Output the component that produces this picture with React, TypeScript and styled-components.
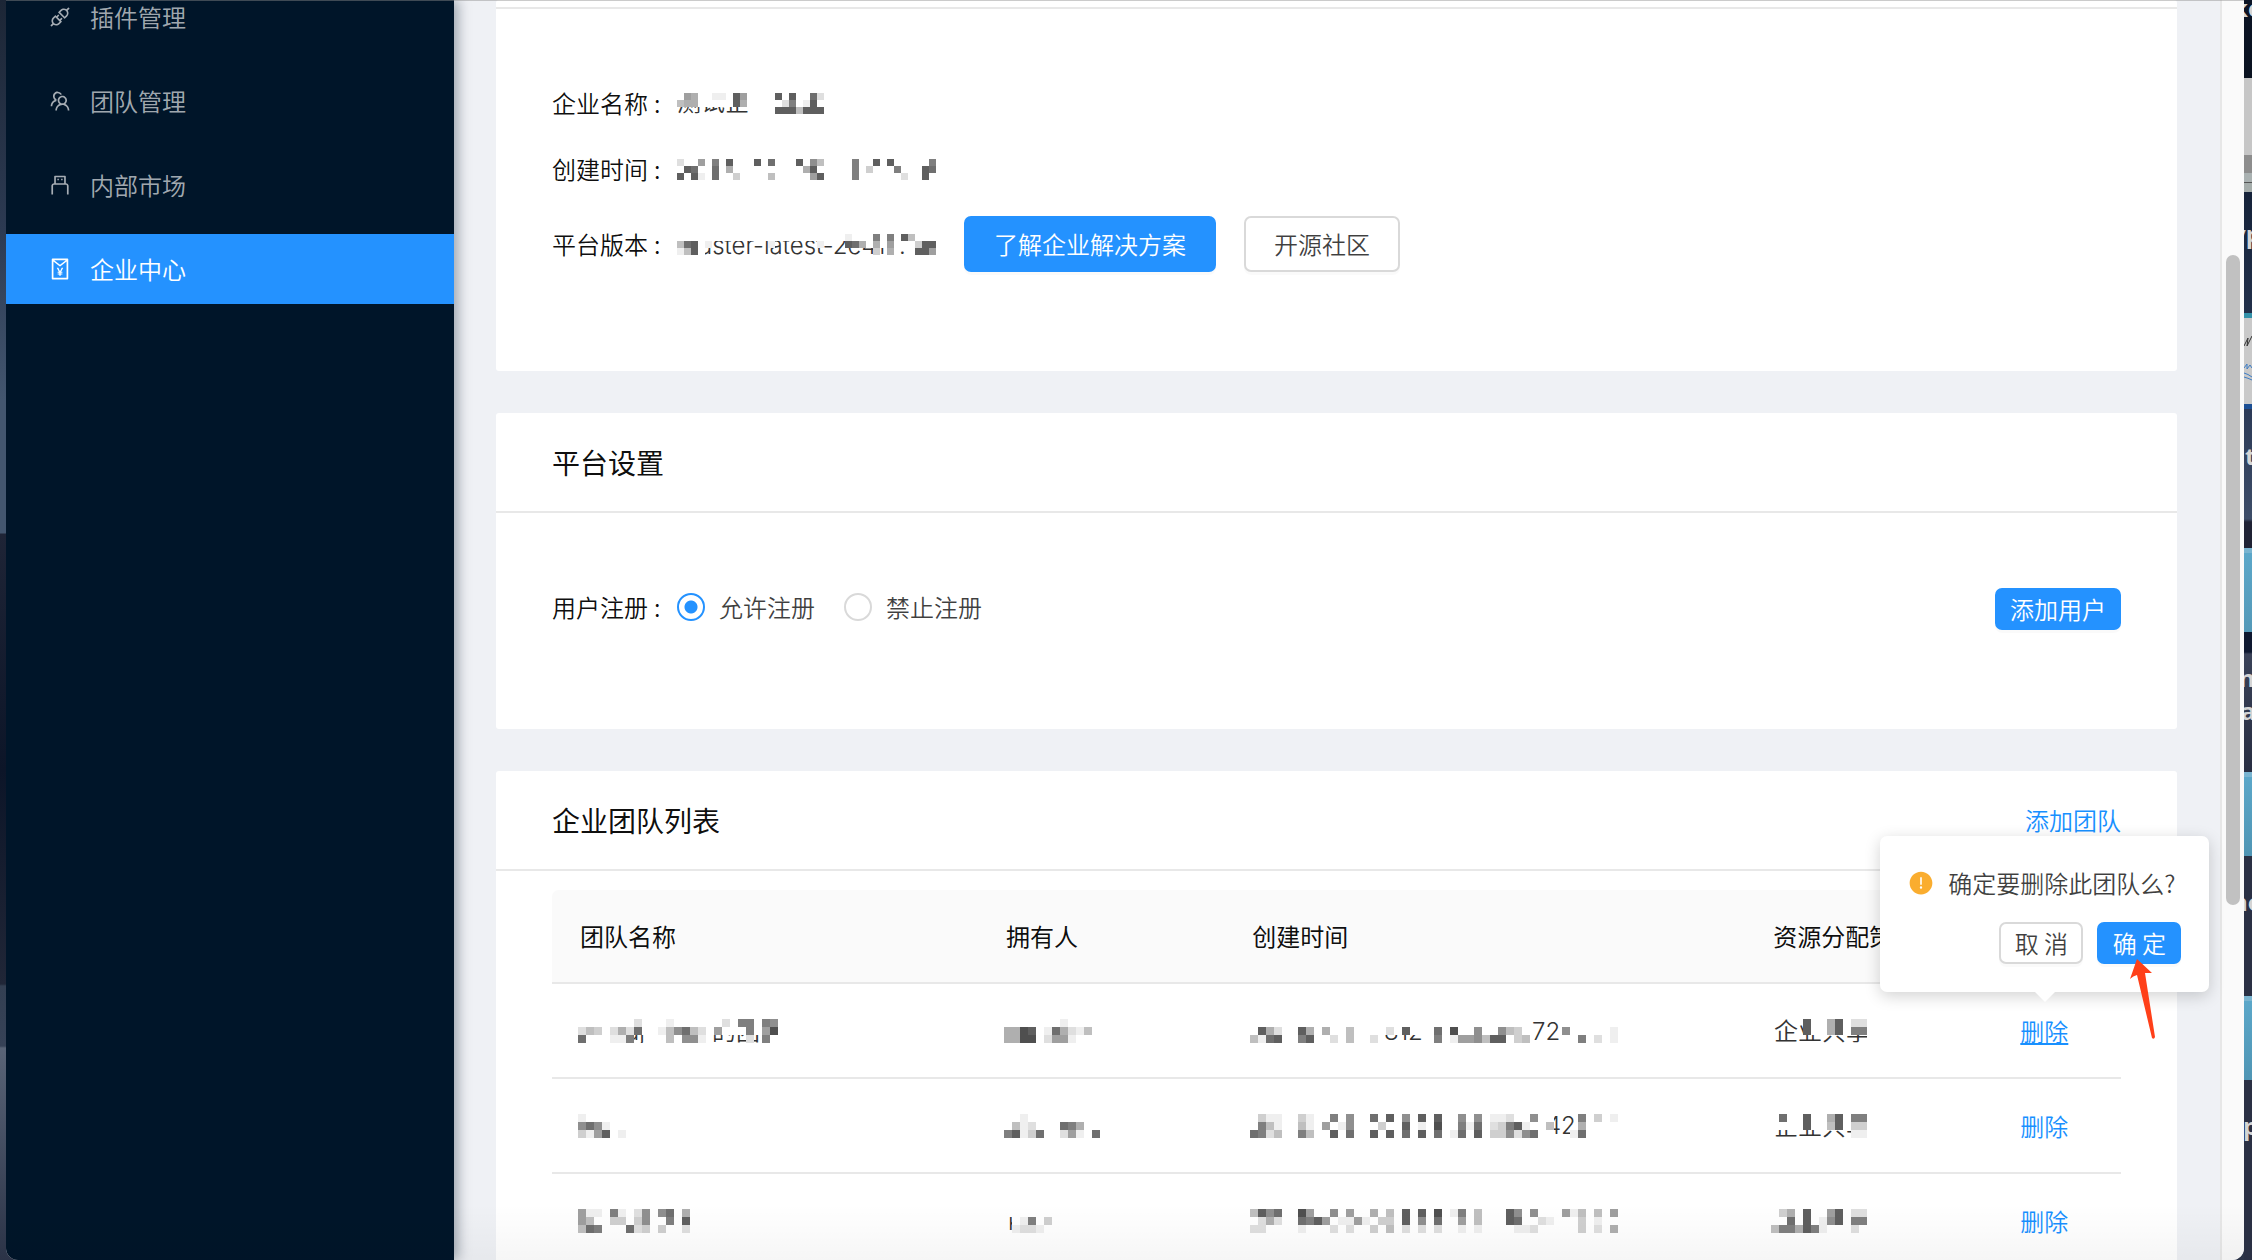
import React, { useState } from "react";
import styled, { createGlobalStyle, css } from "styled-components";
import {
  AiFillExclamationCircle,
  AiOutlineApi,
  AiOutlineRedEnvelope,
  AiOutlineTeam,
  AiOutlineUsb,
} from "react-icons/ai";

const blue = "#2492ff";
const line = "#e8e8e8";

const GlobalStyle = createGlobalStyle`
  *, *::before, *::after { box-sizing: border-box; }
  body { margin: 0; overflow: hidden; background: #1b2233; }
  body, button, input {
    font-family: "Noto Sans CJK SC", sans-serif;
    font-size: 24px;
    font-weight: 350;
    line-height: 38px;
    color: rgba(0, 0, 0, 0.75);
  }
`;

/* ---------- desktop and window frame ---------- */

const Desktop = styled.div`
  display: flex;
  height: 100vh;
  overflow: hidden;
  background: linear-gradient(
    180deg,
    #1c2636 0,
    #2c3a52 230px,
    #43566f 400px,
    #43566f 533px,
    #1e2436 534px,
    #0c1528 770px,
    #202637 984px,
    #333f52 986px,
    #364257 1046px,
    #596477 1048px,
    #2b3347 100%
  );
`;

const Window = styled.div`
  position: relative;
  display: flex;
  flex: 1;
  min-width: 0;
  margin-left: 6px;
  overflow: hidden;
  border-radius: 0 0 12px 12px;
  background: #eff1f5;

  &::before {
    content: "";
    position: absolute;
    z-index: 5;
    top: 0;
    left: 0;
    right: 0;
    height: 1px;
    background: rgba(140, 140, 140, 0.45);
  }

  &::after {
    content: "";
    position: absolute;
    z-index: 5;
    left: 0;
    right: 0;
    bottom: 0;
    height: 56px;
    pointer-events: none;
    background: linear-gradient(180deg, rgba(0, 0, 0, 0), rgba(0, 0, 0, 0.035));
  }
`;

const Strip = styled.div`
  display: flex;
  flex: none;
  flex-direction: column;
  width: 8px;
  overflow: hidden;
`;

const Tile = styled.div<{ $height: number; $fill: string }>`
  position: relative;
  flex: none;
  height: ${(p) => p.$height}px;
  overflow: hidden;
  background: ${(p) => p.$fill};
`;

const TileText = styled.span<{ $top: number; $left: number }>`
  position: absolute;
  top: ${(p) => p.$top}px;
  left: ${(p) => p.$left}px;
  font-family: "Open Sans", sans-serif;
  font-size: 24px;
  font-weight: 700;
  line-height: 28px;
  color: #d4d4d4;
`;

/* ---------- sidebar ---------- */

const Sidebar = styled.nav`
  position: relative;
  z-index: 1;
  display: flex;
  flex: none;
  flex-direction: column;
  gap: 14px;
  width: 448px;
  background: #001529;
  box-shadow: 4px 0 12px rgba(0, 21, 41, 0.35);
`;

const MenuItem = styled.a<{ $active?: boolean }>`
  display: flex;
  flex: none;
  align-items: center;
  gap: 18px;
  height: 70px;
  padding: 0 42px;
  color: rgba(255, 255, 255, 0.65);
  text-decoration: none;

  &:first-child {
    margin-top: -18px;
  }

  svg {
    flex: none;
    width: 24px;
    height: 24px;
  }

  ${(p) =>
    p.$active &&
    css`
      background: ${blue};
      color: #fff;
    `}
`;

/* ---------- content ---------- */

const Main = styled.main`
  display: flex;
  flex: 1;
  flex-direction: column;
  gap: 42px;
  min-width: 0;
  padding: 0 43px 0 42px;
`;

const Card = styled.section`
  flex: none;
  border-radius: 3px;
  background: #fff;
`;

const CardHeader = styled.header<{ $scrolled?: boolean }>`
  display: flex;
  align-items: center;
  justify-content: space-between;
  height: ${(p) => (p.$scrolled ? 9 : 100)}px;
  padding: 0 56px;
  border-bottom: 2px solid ${line};
`;

const Title = styled.h2`
  margin: 0;
  font-size: 28px;
  font-weight: 400;
  line-height: 42px;
  color: rgba(0, 0, 0, 0.95);
`;

const CardBody = styled.div`
  display: flex;
  flex-direction: column;
  gap: 28px;
  padding: 75px 56px 99px;
`;

const TableBody = styled.div`
  padding: 19px 56px 42px;
`;

const Field = styled.div`
  display: flex;
  align-items: center;
`;

const Settings = styled.div`
  display: flex;
  align-items: flex-start;
  justify-content: space-between;
`;

const Label = styled.span`
  display: flex;
  flex: none;
  gap: 6px;
  width: 125px;
  color: rgba(0, 0, 0, 0.95);
`;

const Actions = styled.div`
  display: flex;
  gap: 28px;
  margin-left: 28px;
`;

const Button = styled.button<{ $primary?: boolean; $small?: boolean }>`
  flex: none;
  height: ${(p) => (p.$small ? 42 : 56)}px;
  padding: 0 ${(p) => (p.$small ? 13 : 28)}px;
  border: 2px solid ${(p) => (p.$primary ? blue : "#d9d9d9")};
  border-radius: 7px;
  background: ${(p) => (p.$primary ? blue : "#fff")};
  box-shadow: 0 3px 0 rgba(0, 0, 0, 0.02);
  color: ${(p) => (p.$primary ? "#fff" : "rgba(0, 0, 0, 0.75)")};
  white-space: nowrap;
  cursor: pointer;
`;

const RadioGroup = styled.div`
  display: flex;
  gap: 29px;
`;

const RadioLabel = styled.label`
  display: flex;
  align-items: center;
  gap: 14px;
  cursor: pointer;
`;

const Radio = styled.input`
  appearance: none;
  width: 28px;
  height: 28px;
  margin: 0;
  border: 2px solid #d9d9d9;
  border-radius: 50%;
  background: #fff;

  &:checked {
    border-color: ${blue};
    background: radial-gradient(circle, ${blue} 6px, #fff 7px);
  }
`;

const TextLink = styled.a<{ $hovered?: boolean }>`
  color: #1890ff;
  text-decoration: ${(p) => (p.$hovered ? "underline" : "none")};
  text-decoration-thickness: 2px;
  text-underline-offset: 2px;
`;

/* ---------- table ---------- */

const Table = styled.table`
  width: 100%;
  border-collapse: separate;
  border-spacing: 0;
  table-layout: fixed;
`;

const Col = styled.col<{ $share: number }>`
  width: ${(p) => p.$share}%;
`;

const HeadCell = styled.th`
  height: 94px;
  padding: 0 0 0 28px;
  border-bottom: 2px solid ${line};
  background: #fafafa;
  color: rgba(0, 0, 0, 0.95);
  font-weight: 400;
  text-align: left;
  white-space: nowrap;

  &:first-child {
    border-top-left-radius: 7px;
  }
`;

const Cell = styled.td`
  height: 95px;
  padding: 0 0 0 28px;
  border-bottom: 2px solid ${line};
`;

/* ---------- confirmation bubble ---------- */

const Anchor = styled.span`
  position: relative;
  display: block;
  width: 48px;
`;

const Bubble = styled.div`
  position: absolute;
  z-index: 3;
  bottom: calc(100% + 20px);
  left: 50%;
  display: flex;
  flex-direction: column;
  gap: 20px;
  width: 329px;
  margin-left: -164px;
  padding: 28px;
  border-radius: 7px;
  background: #fff;
  box-shadow: 0 4px 16px rgba(0, 0, 0, 0.18);

  &::after {
    content: "";
    position: absolute;
    top: 100%;
    left: 50%;
    margin-left: -10px;
    border: 10px solid transparent;
    border-top-color: #fff;
    border-bottom-width: 0;
  }
`;

const Message = styled.div`
  display: flex;
  align-items: center;
  gap: 14px;
  white-space: nowrap;

  svg {
    flex: none;
    width: 26px;
    height: 26px;
    color: #faad2f;
  }
`;

const BubbleActions = styled.div`
  display: flex;
  justify-content: flex-end;
  gap: 14px;

  button {
    width: 84px;
    padding: 0;
  }
`;

const Pointer = styled.svg`
  position: absolute;
  z-index: 1;
  top: 122px;
  left: 248px;
  width: 30px;
  height: 84px;
`;

/* ---------- scrollbar ---------- */

const Track = styled.div`
  flex: none;
  width: 24px;
  padding: 255px 4px 0 4px;
  border-left: 2px solid #e7e7e7;
  background: #fafafa;
`;

const Thumb = styled.div`
  width: 14px;
  height: 650px;
  border-radius: 7px;
  background: #c1c1c1;
`;

/* ---------- pixelated values ---------- */

const MosaicSvg = styled.svg`
  display: block;
  flex: none;
  overflow: hidden;
  font-family: Inter, "Noto Sans CJK SC", sans-serif;
  font-size: 24px;
  font-weight: 350;
`;

const CellMosaic = styled.div`
  margin-left: -2px;
`;

type Fragment = { x: number; y: number; text: string };

type MosaicData = {
  cols: number;
  /* One entry per row: "column:shade" or "from-to:shade", shade in hex, 0 = white. */
  rows: string[];
  texts?: Fragment[];
};

function Mosaic({ data, unit }: { data: MosaicData; unit: number }) {
  const width = data.cols * unit;
  const height = data.rows.length * unit;
  return (
    <MosaicSvg
      width={width}
      height={height}
      viewBox={`0 0 ${width} ${height}`}
      shapeRendering="crispEdges"
    >
      {data.texts?.map((t) => (
        <text key={t.text} x={t.x} y={t.y} fill="#333">
          {t.text}
        </text>
      ))}
      {data.rows.flatMap((row, r) =>
        row
          .split(" ")
          .filter(Boolean)
          .map((entry) => {
            const [span, shade] = entry.split(":");
            const [from, to = from] = span.split("-");
            const gray = 255 - parseInt(shade, 16) * 16;
            return (
              <rect
                key={`${r}-${entry}`}
                x={Number(from) * unit}
                y={r * unit}
                width={(Number(to) - Number(from) + 1) * unit}
                height={unit}
                fill={`rgb(${gray}, ${gray}, ${gray})`}
              />
            );
          })
      )}
    </MosaicSvg>
  );
}

const companyName: MosaicData = {
  cols: 21,
  rows: [
    "0-10:0 1:6 2:5 5:1 6:1 8:a 9:6 14:a 16:a 19:9 20:2",
    "0-10:0 0:4 1:5 2:5 8:a 9:5 15:2 16:8 18:1 19:a",
    "14-16:a 17:4 18-20:a",
  ],
  texts: [{ x: 0, y: 18, text: "测试企" }],
};

const createdAt: MosaicData = {
  cols: 37,
  rows: [
    "0:2 3:6 5:8 7:a 11:a 13:9 17:a 19:7 20:4 25:8 28:a 30:a 36:8",
    "1:a 2:9 5:9 7:5 18:5 19:a 25:8 27:3 31:8 35:a 36:9",
    "0:a 2:a 3:1 5:9 8:3 13:4 19:6 20:a 25:8 32:2 35:a",
  ],
};

const version: MosaicData = {
  cols: 37,
  rows: [
    "0-36:0 24:1 28:8 30:8 32:a 33:4",
    "0:4 1:9 2:a 3:0 4:1 13:1 20:1 24:a 25:9 26:5 27:0 28:5 29:0 30:6 31-33:0 34:3 35:a 36:a",
    "0:1 1:4 2:a 3:0 28:3 30:5 34:a 35:a 36:6",
  ],
  texts: [
    { x: 22, y: 20, text: "aster-latest-2e41" },
    { x: 222, y: 20, text: "." },
  ],
};

type Team = { id: string; name: MosaicData; owner: MosaicData; created: MosaicData; policy: MosaicData };

const teams: Team[] = [
  {
    id: "first",
    name: {
      cols: 25,
      rows: [
        "5-24:0 7:2 11:1 18:2 20:8 21:8 23:8 24:7",
        "5-24:0 0:2 1:4 2:3 4:2 5:5 6:2 7:9 10:1 11:4 12:7 13:9 14:4 15:2 17:6 21:8 23:6 24:b",
        "0:9 4:1 5:1 6:8 11:4 13:7 14:7 15:1 21:2 23:8 24:0",
      ],
      texts: [
        { x: 48, y: 21, text: "aj" },
        { x: 134, y: 21, text: "的团" },
      ],
    },
    owner: {
      cols: 12,
      rows: ["7:1", "0:5 1:5 2:b 3:a 5:1 6:9 7:5 8:2 9:1 10:4", "0:5 1:5 2:b 3:b 5:2 6:6 7:6 8:1"],
    },
    created: {
      cols: 46,
      rows: [
        "15-22:0 43:0",
        "1:a 2:5 3:2 6:a 7:5 9:5 12:4 15-18:0 17:2 19:a 20-22:0 23:9 25:b 28:7 31:7 32:4 33:3 39:7 45:1",
        "0:4 1:1 2:9 3:a 6:8 7:a 10:2 12:4 15:2 23:8 25:1 26:6 27:6 28:7 29:4 30:a 31:a 33:3 34:4 41:8 43:2 45:1",
      ],
      texts: [
        { x: 134, y: 21, text: "812" },
        { x: 282, y: 21, text: "72" },
      ],
    },
    policy: {
      cols: 12,
      rows: [
        "4:a 5-11:0 7:5 8:a 10:2 11:2",
        "4:a 5-11:0 7:5 8:a 10:8 11:8",
        "",
      ],
      texts: [{ x: 3, y: 21, text: "企业共享" }],
    },
  },
  {
    id: "second",
    name: { cols: 25, rows: ["0:1", "0:7 1:9 2:7 3:1", "0:3 1:1 2:6 3:a 5:1"] },
    owner: {
      cols: 12,
      rows: ["2:1", "1:4 2:1 3:2 7:9 8:8 9:5", "0:8 1:a 2:1 3:3 4:9 7:2 8:6 9:1 11:9"],
    },
    created: {
      cols: 46,
      rows: [
        "1:3 2:1 3:1 6:3 7:1 10:8 12:7 15:9 17:a 19:7 21:a 23:a 26:7 28:7 30:1 31:1 32:2 35:7 37:0 41:8 43:3 45:1",
        "1:8 2:4 3:1 6:4 7:1 9:6 11:1 12:7 16:3 19:a 21:1 23:b 26:8 27:1 28:9 30:2 31:3 32:8 33:a 34:1 37:4 41:5",
        "0:9 1:8 2:2 3:4 6:8 7:4 10:a 12:9 15:a 17:a 19:9 21:a 23:9 25:1 26:9 28:a 30:3 31:3 32:7 33:2 34:7 35:9 37:0 40:1 41:9",
      ],
      texts: [{ x: 296, y: 20, text: "42" }],
    },
    policy: {
      cols: 12,
      rows: [
        "0-11:0 1:9 4:a 7:5 8:a 10:8 11:8",
        "0-11:0 4:a 7:4 8:a 10:3 11:3",
        "10:1 11:1",
      ],
      texts: [{ x: 3, y: 21, text: "企业共享" }],
    },
  },
  {
    id: "third",
    name: {
      cols: 25,
      rows: [
        "0:6 1:1 2:1 4:8 5:1 7:2 8:7 10:7 11:9 13:5",
        "0:6 1:4 4:3 5:3 7:3 8:7 11:8 13:a",
        "0:4 1:9 2:8 6:9 7:2 8:3 10:3 13:2",
      ],
    },
    owner: {
      cols: 12,
      rows: ["0-2:0", "1:0 2:1 3:8 5:3", "1:1 2:2 3:2 4:1"],
      texts: [{ x: 4, y: 21, text: "k" }],
    },
    created: {
      cols: 46,
      rows: [
        "0:4 1:a 2:7 3:9 6:b 7:6 10:7 12:6 15:5 17:4 19:a 21:a 23:b 25:1 26:8 28:4 32:a 33:7 35:7 39:6 40:1 41:4 43:4 45:6",
        "1:2 2:5 3:2 6:9 7:8 8:a 9:6 11:1 12:1 13:6 14:1 16:3 17:3 19:a 21:7 23:9 26:6 28:4 32:a 33:9 36:2 37:1 41:3 43:1",
        "0:2 1:2 6:1 10:2 12:2 15:3 17:4 19:2 21:2 23:2 26:1 28:1 33:1 34:1 35:2 41:3 43:2 45:5",
      ],
    },
    policy: {
      cols: 12,
      rows: [
        "1:3 2:5 4:a 7:6 8:a 10:2 11:2",
        "2:9 4:a 6:1 7:7 8:a 10:8 11:8",
        "0:4 1:8 2:8 3:5 4:a 5:8 6:1 10:2",
      ],
    },
  },
];

const menu = [
  { text: "插件管理", Icon: AiOutlineApi },
  { text: "团队管理", Icon: AiOutlineTeam },
  { text: "内部市场", Icon: AiOutlineUsb },
  { text: "企业中心", Icon: AiOutlineRedEnvelope, active: true },
];

const columns = [
  { text: "团队名称", share: 27.15 },
  { text: "拥有人", share: 15.7 },
  { text: "创建时间", share: 33.2 },
  { text: "资源分配策略", share: 15.75 },
  { text: "", share: 8.2 },
];

function ConfirmBubble() {
  return (
    <Bubble role="dialog" aria-labelledby="confirm-text">
      <Message>
        <AiFillExclamationCircle />
        <span id="confirm-text">确定要删除此团队么?</span>
      </Message>
      <BubbleActions>
        <Button type="button" $small>
          取 消
        </Button>
        <Button type="button" $small $primary>
          确 定
        </Button>
      </BubbleActions>
      <Pointer viewBox="0 0 30 84" fill="#ff4019">
        <path d="M9 1 L24 15 Q20 15 17 15 L27 79 Q26 82 24 80 L9 17 Q5 18 2 21 Z" />
      </Pointer>
    </Bubble>
  );
}

export default function App() {
  const [registration, setRegistration] = useState("allow");

  return (
    <>
      <GlobalStyle />
      <Desktop>
        <Window>
          <Sidebar>
            {menu.map(({ text, Icon, active }) => (
              <MenuItem key={text} href="#" $active={active}>
                <Icon />
                {text}
              </MenuItem>
            ))}
          </Sidebar>

          <Main>
            <Card>
              <CardHeader $scrolled />
              <CardBody>
                <Field>
                  <Label>
                    企业名称<span>:</span>
                  </Label>
                  <Mosaic data={companyName} unit={7} />
                </Field>
                <Field>
                  <Label>
                    创建时间<span>:</span>
                  </Label>
                  <Mosaic data={createdAt} unit={7} />
                </Field>
                <Field>
                  <Label>
                    平台版本<span>:</span>
                  </Label>
                  <Mosaic data={version} unit={7} />
                  <Actions>
                    <Button type="button" $primary>
                      了解企业解决方案
                    </Button>
                    <Button type="button">开源社区</Button>
                  </Actions>
                </Field>
              </CardBody>
            </Card>

            <Card>
              <CardHeader>
                <Title>平台设置</Title>
              </CardHeader>
              <CardBody>
                <Settings>
                  <Field>
                    <Label id="registration">
                      用户注册<span>:</span>
                    </Label>
                    <RadioGroup role="radiogroup" aria-labelledby="registration">
                      <RadioLabel>
                        <Radio
                          type="radio"
                          name="registration"
                          checked={registration === "allow"}
                          onChange={() => setRegistration("allow")}
                        />
                        允许注册
                      </RadioLabel>
                      <RadioLabel>
                        <Radio
                          type="radio"
                          name="registration"
                          checked={registration === "deny"}
                          onChange={() => setRegistration("deny")}
                        />
                        禁止注册
                      </RadioLabel>
                    </RadioGroup>
                  </Field>
                  <Button type="button" $primary $small>
                    添加用户
                  </Button>
                </Settings>
              </CardBody>
            </Card>

            <Card>
              <CardHeader>
                <Title>企业团队列表</Title>
                <TextLink href="#">添加团队</TextLink>
              </CardHeader>
              <TableBody>
                <Table>
                  <colgroup>
                    {columns.map((c) => (
                      <Col key={c.text} $share={c.share} />
                    ))}
                  </colgroup>
                  <thead>
                    <tr>
                      {columns.map((c) => (
                        <HeadCell key={c.text} scope="col">
                          {c.text}
                        </HeadCell>
                      ))}
                    </tr>
                  </thead>
                  <tbody>
                    {teams.map((team, i) => (
                      <tr key={team.id}>
                        {[team.name, team.owner, team.created, team.policy].map((data, c) => (
                          <Cell key={c}>
                            <CellMosaic>
                              <Mosaic data={data} unit={8} />
                            </CellMosaic>
                          </Cell>
                        ))}
                        <Cell>
                          <Anchor>
                            <TextLink href="#" $hovered={i === 0}>
                              删除
                            </TextLink>
                            {i === 0 && <ConfirmBubble />}
                          </Anchor>
                        </Cell>
                      </tr>
                    ))}
                  </tbody>
                </Table>
              </TableBody>
            </Card>
          </Main>

          <Track>
            <Thumb />
          </Track>
        </Window>

        <Strip>
          <Tile $height={78} $fill="linear-gradient(#0c1526, #0a1220)">
            <TileText $top={-6} $left={-11}>ke</TileText>
          </Tile>
          <Tile $height={77} $fill="#c6c6c6" />
          <Tile $height={18} $fill="#8d8d8d" />
          <Tile $height={19} $fill="linear-gradient(#a9b1b1 9px, #555 9px, #555 10px, #a4acaa 10px)" />
          <Tile $height={121} $fill="linear-gradient(#16233a, #22304a)">
            <TileText $top={28} $left={-12}>yp</TileText>
          </Tile>
          <Tile $height={5} $fill="#3391a9" />
          <Tile $height={86} $fill="#c9c9c9">
            <svg width="8" height="86" viewBox="0 0 8 86" fill="none">
              <path d="M0 28 L4 20 L3 28 L8 18" stroke="#333" strokeWidth="1" />
              <path d="M0 50 L3 46 L3 51 L6 47 L8 50 M0 55 Q4 56 8 59 M0 59 Q4 60 8 62" stroke="#3d7cc4" />
            </svg>
          </Tile>
          <Tile $height={5} $fill="#1c4f94" />
          <Tile $height={139} $fill="linear-gradient(#2c3a57, #3d4d68 110px, #1f2234 113px)">
            <TileText $top={33} $left={1}>t</TileText>
          </Tile>
          <Tile $height={84} $fill="linear-gradient(#79b4d0 5px, #5ba7c9 5px, #5499b8)" />
          <Tile $height={140} $fill="linear-gradient(#0e1830 20px, #3a4258 22px, #282e42)">
            <TileText $top={32} $left={-5}>n</TileText>
            <TileText $top={65} $left={-3}>a</TileText>
          </Tile>
          <Tile $height={84} $fill="linear-gradient(#79b4d0 5px, #5ba7c9 5px, #4f95b4)" />
          <Tile $height={140} $fill="#2a3044">
            <TileText $top={32} $left={-12}>no</TileText>
          </Tile>
          <Tile $height={84} $fill="linear-gradient(#79b4d0 5px, #5ba7c9 5px, #4f95b4)" />
          <Tile $height={180} $fill="#2a3044">
            <TileText $top={32} $left={-1}>p</TileText>
          </Tile>
        </Strip>
      </Desktop>
    </>
  );
}
